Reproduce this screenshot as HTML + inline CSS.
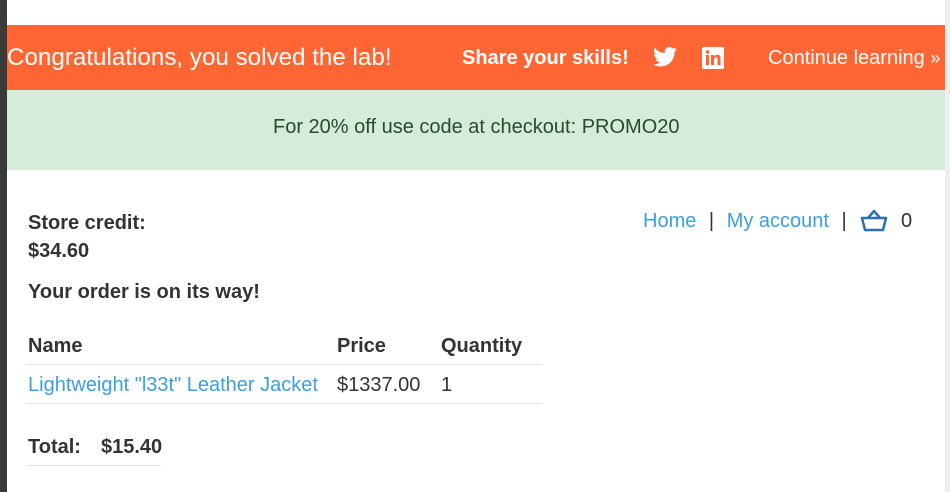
<!DOCTYPE html>
<html><head><style>
body{margin:0;width:950px;height:492px;overflow:hidden;background:#fff;font-family:"Liberation Sans",sans-serif;position:relative;color:#333}
.abs{position:absolute;white-space:nowrap}
.l{color:#3b9fe0}
</style></head><body>
<div class="abs" style="left:0;top:0;width:7px;height:492px;background:#3a3a3a"></div>
<div class="abs" style="left:945px;top:0;width:5px;height:492px;background:#efefef"></div>
<div class="abs" style="left:7px;top:25px;width:938px;height:65px;background:#ff6633"></div>
<div class="abs" style="left:7px;top:90px;width:938px;height:80px;background:#d4eddb"></div>
<div class="abs" style="left:7px;top:44px;font-size:24.2px;color:#fff">Congratulations, you solved the lab!</div>
<div class="abs" style="left:462px;top:47px;font-size:20px;font-weight:bold;color:#fff">Share your skills!</div>
<svg class="abs" style="left:653px;top:47px" width="24" height="20" viewBox="0 0 24 20"><path fill="#fff" d="M24 2.4c-.9.4-1.8.6-2.8.8 1-.6 1.8-1.6 2.2-2.7-1 .6-2 1-3.1 1.2C19.3.7 18 0 16.6 0c-2.7 0-4.9 2.2-4.9 4.9 0 .4 0 .8.1 1.1C7.7 5.8 4.1 3.9 1.7.9c-.4.7-.7 1.6-.7 2.5 0 1.7.9 3.2 2.2 4.1-.8 0-1.6-.2-2.2-.6v.1c0 2.4 1.7 4.4 3.9 4.8-.4.1-.8.2-1.3.2-.3 0-.6 0-.9-.1.6 2 2.4 3.4 4.6 3.4-1.7 1.3-3.8 2.1-6.1 2.1-.4 0-.8 0-1.2-.1 2.2 1.4 4.8 2.2 7.5 2.2 9.1 0 14-7.5 14-14v-.6c1-.7 1.8-1.6 2.5-2.5z"/></svg>
<svg class="abs" style="left:702px;top:47px" width="22" height="22" viewBox="0 0 22 22"><rect width="22" height="22" rx="2" fill="#fff"/><rect x="4" y="8" width="3" height="10" fill="#ff6633"/><circle cx="5.5" cy="5" r="1.8" fill="#ff6633"/><path d="M9 8h3v1.5c.6-1 1.8-1.8 3.3-1.8 2.5 0 3.2 1.6 3.2 4V18h-3v-5.5c0-1.3-.3-2.3-1.6-2.3-1.4 0-1.9 1-1.9 2.3V18H9z" fill="#ff6633"/></svg>
<div class="abs" style="left:768px;top:47px;font-size:20px;color:#fff">Continue learning <span style="font-size:18px">&#187;</span></div>
<div class="abs" style="left:273px;top:116px;font-size:20px;color:#2a4a2a">For 20% off use code at checkout: PROMO20</div>
<div class="abs" style="left:28px;top:209px;font-size:20px;font-weight:bold;line-height:28px">Store credit:<br>$34.60</div>
<div class="abs" style="left:643px;top:210px;font-size:20px"><span class="l">Home</span> <span style="color:#333;margin:0 7px">|</span> <span class="l">My account</span> <span style="color:#333;margin:0 7px">|</span></div>
<svg class="abs" style="left:860px;top:209px" width="28" height="24" viewBox="0 0 28 24"><path d="M2 9h24l-3 12H5z M8 9l6-7 6 7" fill="none" stroke="#2b6fb5" stroke-width="2.5" stroke-linejoin="round"/></svg>
<div class="abs" style="left:901px;top:210px;font-size:20px">0</div>
<div class="abs" style="left:28px;top:281px;font-size:20px;font-weight:bold">Your order is on its way!</div>
<div class="abs" style="left:28px;top:335px;font-size:20px;font-weight:bold">Name</div>
<div class="abs" style="left:337px;top:335px;font-size:20px;font-weight:bold">Price</div>
<div class="abs" style="left:441px;top:335px;font-size:20px;font-weight:bold">Quantity</div>
<div class="abs" style="left:26px;top:364px;width:516px;height:1px;background:#e4e4e4"></div>
<div class="abs l" style="left:28px;top:374px;font-size:20px">Lightweight "l33t" Leather Jacket</div>
<div class="abs" style="left:337px;top:374px;font-size:20px">$1337.00</div>
<div class="abs" style="left:441px;top:374px;font-size:20px">1</div>
<div class="abs" style="left:26px;top:403px;width:516px;height:1px;background:#e4e4e4"></div>
<div class="abs" style="left:28px;top:436px;font-size:20px;font-weight:bold">Total:</div>
<div class="abs" style="left:101px;top:436px;font-size:20px;font-weight:bold">$15.40</div>
<div class="abs" style="left:26px;top:465px;width:135px;height:1px;background:#e4e4e4"></div>
</body></html>
